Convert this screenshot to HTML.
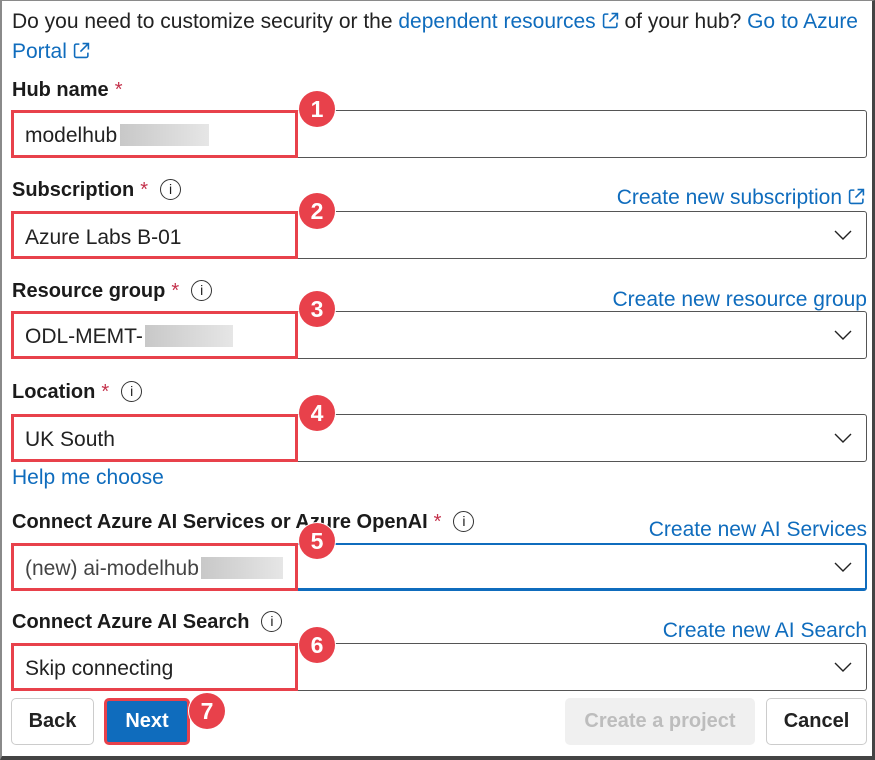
<!DOCTYPE html>
<html><head><meta charset="utf-8"><style>
*{margin:0;padding:0;box-sizing:border-box}
body{width:875px;height:760px;background:#fff;font-family:"Liberation Sans",sans-serif;font-size:21px;color:#222;position:relative;overflow:hidden}
.frame{position:absolute;left:0;top:0;width:875px;height:760px;border-left:2px solid #8a8a8a;border-top:1px solid #8a8a8a;border-right:3px solid #444;border-bottom:4px solid #444}
.a{position:absolute;white-space:nowrap}
.lnk{color:#0f6cbd}
.lbl{font-weight:bold;color:#1b1b1b;font-size:20px}
.req{color:#c4314b;font-weight:normal;margin-left:6px}
.info{display:inline-block;width:21px;height:21px;border:1.4px solid #333;border-radius:50%;font-size:14px;text-align:center;line-height:18px;font-weight:normal;vertical-align:2px;margin-left:12px;font-family:"Liberation Sans",sans-serif}
.box{position:absolute;left:11px;width:856px;height:48px;border:1px solid #555;border-radius:3px}
.red{position:absolute;left:11px;width:287px;height:48px;border:3px solid #e8414b}
.val{position:absolute;left:25px;font-size:21px;color:#222;white-space:nowrap}
.blur{display:inline-block;height:22px;background:linear-gradient(90deg,#c8c8c8,#e6e6e6);vertical-align:-4px}
.chev{position:absolute;left:833px;width:20px;height:12px}
.num{position:absolute;width:36px;height:36px;border-radius:50%;background:#e8414b;color:#fff;font-weight:bold;font-size:23px;text-align:center;line-height:36px;box-shadow:0 0 0 1px #fff}
.btn{position:absolute;top:698px;height:47px;border:1px solid #ccc;border-radius:5px;font-weight:bold;font-size:20px;text-align:center;line-height:45px}
.ext{display:inline-block;width:17px;height:17px;vertical-align:-1px;margin-left:6px}
</style></head><body>
<div class="frame"></div>
<div class="a" style="left:12px;top:10px">Do you need to customize security or the <span class="lnk">dependent resources<svg class="ext" viewBox="0 0 16 16"><path d="M6 2H3a1.5 1.5 0 0 0-1.5 1.5v9.5A1.5 1.5 0 0 0 3 14.5h9.5A1.5 1.5 0 0 0 14 13V10M9 1.5h5.5V7M14.5 1.5L7 9" fill="none" stroke="#0f6cbd" stroke-width="1.5"/></svg></span> of your hub? <span class="lnk">Go to Azure</span></div>
<div class="a lnk" style="left:12px;top:40px">Portal<svg class="ext" viewBox="0 0 16 16"><path d="M6 2H3a1.5 1.5 0 0 0-1.5 1.5v9.5A1.5 1.5 0 0 0 3 14.5h9.5A1.5 1.5 0 0 0 14 13V10M9 1.5h5.5V7M14.5 1.5L7 9" fill="none" stroke="#0f6cbd" stroke-width="1.5"/></svg></div>

<div class="a lbl" style="left:12px;top:79px">Hub name<span class="req">*</span></div>
<div class="box" style="top:110px"></div><div class="red" style="top:110px"></div>
<div class="val" style="top:124px">modelhub<span class="blur" style="width:89px;margin-left:3px"></span></div>
<div class="num" style="left:299px;top:91px">1</div>

<div class="a lbl" style="left:12px;top:179px">Subscription<span class="req">*</span><span class="info">i</span></div>
<div class="a lnk" style="right:10px;top:186px">Create new subscription<svg class="ext" viewBox="0 0 16 16"><path d="M6 2H3a1.5 1.5 0 0 0-1.5 1.5v9.5A1.5 1.5 0 0 0 3 14.5h9.5A1.5 1.5 0 0 0 14 13V10M9 1.5h5.5V7M14.5 1.5L7 9" fill="none" stroke="#0f6cbd" stroke-width="1.5"/></svg></div>
<div class="box" style="top:211px"></div><div class="red" style="top:211px"></div>
<div class="val" style="top:226px">Azure Labs B-01</div>
<svg class="chev" style="top:229px" viewBox="0 0 20 12"><path d="M2 2l8 8 8-8" fill="none" stroke="#222" stroke-width="1.4"/></svg>
<div class="num" style="left:299px;top:193px">2</div>

<div class="a lbl" style="left:12px;top:280px">Resource group<span class="req">*</span><span class="info">i</span></div>
<div class="a lnk" style="right:8px;top:288px">Create new resource group</div>
<div class="box" style="top:311px"></div><div class="red" style="top:311px"></div>
<div class="val" style="top:325px">ODL-MEMT-<span class="blur" style="width:88px;margin-left:2px"></span></div>
<svg class="chev" style="top:329px" viewBox="0 0 20 12"><path d="M2 2l8 8 8-8" fill="none" stroke="#222" stroke-width="1.4"/></svg>
<div class="num" style="left:299px;top:291px">3</div>

<div class="a lbl" style="left:12px;top:381px">Location<span class="req">*</span><span class="info">i</span></div>
<div class="box" style="top:414px"></div><div class="red" style="top:414px"></div>
<div class="val" style="top:428px">UK South</div>
<svg class="chev" style="top:432px" viewBox="0 0 20 12"><path d="M2 2l8 8 8-8" fill="none" stroke="#222" stroke-width="1.4"/></svg>
<div class="num" style="left:299px;top:395px">4</div>
<div class="a lnk" style="left:12px;top:466px">Help me choose</div>

<div class="a lbl" style="left:12px;top:511px">Connect Azure AI Services or Azure OpenAI<span class="req">*</span><span class="info">i</span></div>
<div class="a lnk" style="right:8px;top:518px">Create new AI Services</div>
<div class="box" style="top:543px;border:2px solid #0f6cbd;border-bottom-width:3px"></div><div class="red" style="top:543px"></div>
<div class="val" style="top:557px;color:#444">(new) ai-modelhub<span class="blur" style="width:82px;margin-left:2px"></span></div>
<svg class="chev" style="top:561px" viewBox="0 0 20 12"><path d="M2 2l8 8 8-8" fill="none" stroke="#222" stroke-width="1.4"/></svg>
<div class="num" style="left:299px;top:523px">5</div>

<div class="a lbl" style="left:12px;top:611px">Connect Azure AI Search<span class="info">i</span></div>
<div class="a lnk" style="right:8px;top:619px">Create new AI Search</div>
<div class="box" style="top:643px"></div><div class="red" style="top:643px"></div>
<div class="val" style="top:657px">Skip connecting</div>
<svg class="chev" style="top:661px" viewBox="0 0 20 12"><path d="M2 2l8 8 8-8" fill="none" stroke="#222" stroke-width="1.4"/></svg>
<div class="num" style="left:299px;top:627px">6</div>

<div class="btn" style="left:11px;width:83px;background:#fff">Back</div>
<div class="btn" style="left:104px;width:86px;background:#0f6cbd;color:#fff;border:3px solid #e8414b;line-height:41px">Next</div>
<div class="num" style="left:189px;top:693px">7</div>
<div class="btn" style="left:565px;width:190px;background:#f0f0f0;color:#bdbdbd;border-color:#f0f0f0">Create a project</div>
<div class="btn" style="left:766px;width:101px;background:#fff">Cancel</div>
</body></html>
